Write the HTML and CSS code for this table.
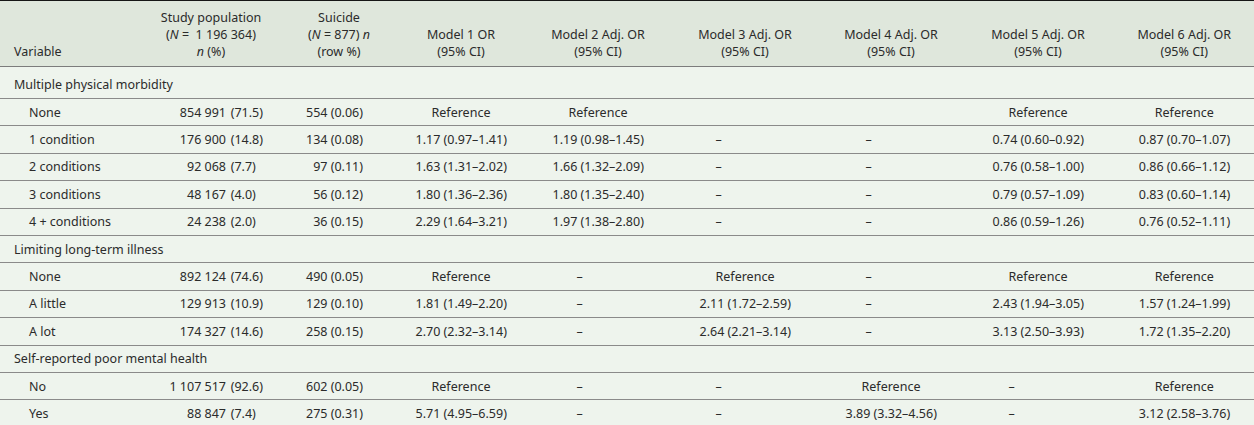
FILE: index.html
```html
<!DOCTYPE html>
<html>
<head>
<meta charset="utf-8">
<link rel="stylesheet" href="styles.css">
</head>
<body>
<table class="tbl">
  <colgroup>
    <col class="c-var"><col class="c-pop"><col class="c-sui"><col class="c-m1"><col class="c-m2"><col class="c-m3"><col class="c-m4"><col class="c-m5"><col class="c-m6">
  </colgroup>
  <thead>
    <tr>
      <th class="h-var">Variable</th>
      <th>Study population<br>(<i>N</i> = &nbsp;1 196 364)<br><i>n</i> (%)</th>
      <th>Suicide<br>(<i>N</i> = 877) <i>n</i><br>(row %)</th>
      <th>Model 1 OR<br>(95% CI)</th>
      <th>Model 2 Adj. OR<br>(95% CI)</th>
      <th>Model 3 Adj. OR<br>(95% CI)</th>
      <th>Model 4 Adj. OR<br>(95% CI)</th>
      <th>Model 5 Adj. OR<br>(95% CI)</th>
      <th>Model 6 Adj. OR<br>(95% CI)</th>
    </tr>
  </thead>
  <tbody>
    <tr class="sec first"><td colspan="9">Multiple physical morbidity</td></tr>
    <tr>
      <td class="sub">None</td><td class="pop"><span class="n">854 991</span><span class="p">(71.5)</span></td><td class="sui">554 (0.06)</td>
      <td class="m"><span class="v">Reference</span></td><td class="m"><span class="v">Reference</span></td><td class="m"></td><td class="m"></td>
      <td class="m"><span class="v">Reference</span></td><td class="m"><span class="v">Reference</span></td>
    </tr>
    <tr>
      <td class="sub">1 condition</td><td class="pop"><span class="n">176 900</span><span class="p">(14.8)</span></td><td class="sui">134 (0.08)</td>
      <td class="m"><span class="v">1.17 (0.97–1.41)</span></td><td class="m"><span class="v">1.19 (0.98–1.45)</span></td><td class="m"><span class="v d">–</span></td><td class="m"><span class="v d">–</span></td>
      <td class="m"><span class="v">0.74 (0.60–0.92)</span></td><td class="m"><span class="v">0.87 (0.70–1.07)</span></td>
    </tr>
    <tr>
      <td class="sub">2 conditions</td><td class="pop"><span class="n">92 068</span><span class="p">(7.7)</span></td><td class="sui">97 (0.11)</td>
      <td class="m"><span class="v">1.63 (1.31–2.02)</span></td><td class="m"><span class="v">1.66 (1.32–2.09)</span></td><td class="m"><span class="v d">–</span></td><td class="m"><span class="v d">–</span></td>
      <td class="m"><span class="v">0.76 (0.58–1.00)</span></td><td class="m"><span class="v">0.86 (0.66–1.12)</span></td>
    </tr>
    <tr>
      <td class="sub">3 conditions</td><td class="pop"><span class="n">48 167</span><span class="p">(4.0)</span></td><td class="sui">56 (0.12)</td>
      <td class="m"><span class="v">1.80 (1.36–2.36)</span></td><td class="m"><span class="v">1.80 (1.35–2.40)</span></td><td class="m"><span class="v d">–</span></td><td class="m"><span class="v d">–</span></td>
      <td class="m"><span class="v">0.79 (0.57–1.09)</span></td><td class="m"><span class="v">0.83 (0.60–1.14)</span></td>
    </tr>
    <tr>
      <td class="sub">4 + conditions</td><td class="pop"><span class="n">24 238</span><span class="p">(2.0)</span></td><td class="sui">36 (0.15)</td>
      <td class="m"><span class="v">2.29 (1.64–3.21)</span></td><td class="m"><span class="v">1.97 (1.38–2.80)</span></td><td class="m"><span class="v d">–</span></td><td class="m"><span class="v d">–</span></td>
      <td class="m"><span class="v">0.86 (0.59–1.26)</span></td><td class="m"><span class="v">0.76 (0.52–1.11)</span></td>
    </tr>
    <tr class="sec"><td colspan="9">Limiting long-term illness</td></tr>
    <tr>
      <td class="sub">None</td><td class="pop"><span class="n">892 124</span><span class="p">(74.6)</span></td><td class="sui">490 (0.05)</td>
      <td class="m"><span class="v">Reference</span></td><td class="m"><span class="v d">–</span></td><td class="m"><span class="v">Reference</span></td><td class="m"><span class="v d">–</span></td>
      <td class="m"><span class="v">Reference</span></td><td class="m"><span class="v">Reference</span></td>
    </tr>
    <tr>
      <td class="sub">A little</td><td class="pop"><span class="n">129 913</span><span class="p">(10.9)</span></td><td class="sui">129 (0.10)</td>
      <td class="m"><span class="v">1.81 (1.49–2.20)</span></td><td class="m"><span class="v d">–</span></td><td class="m"><span class="v">2.11 (1.72–2.59)</span></td><td class="m"><span class="v d">–</span></td>
      <td class="m"><span class="v">2.43 (1.94–3.05)</span></td><td class="m"><span class="v">1.57 (1.24–1.99)</span></td>
    </tr>
    <tr>
      <td class="sub">A lot</td><td class="pop"><span class="n">174 327</span><span class="p">(14.6)</span></td><td class="sui">258 (0.15)</td>
      <td class="m"><span class="v">2.70 (2.32–3.14)</span></td><td class="m"><span class="v d">–</span></td><td class="m"><span class="v">2.64 (2.21–3.14)</span></td><td class="m"><span class="v d">–</span></td>
      <td class="m"><span class="v">3.13 (2.50–3.93)</span></td><td class="m"><span class="v">1.72 (1.35–2.20)</span></td>
    </tr>
    <tr class="sec"><td colspan="9">Self-reported poor mental health</td></tr>
    <tr>
      <td class="sub">No</td><td class="pop"><span class="n">1 107 517</span><span class="p">(92.6)</span></td><td class="sui">602 (0.05)</td>
      <td class="m"><span class="v">Reference</span></td><td class="m"><span class="v d">–</span></td><td class="m"><span class="v d">–</span></td><td class="m"><span class="v">Reference</span></td>
      <td class="m"><span class="v d">–</span></td><td class="m"><span class="v">Reference</span></td>
    </tr>
    <tr>
      <td class="sub">Yes</td><td class="pop"><span class="n">88 847</span><span class="p">(7.4)</span></td><td class="sui">275 (0.31)</td>
      <td class="m"><span class="v">5.71 (4.95–6.59)</span></td><td class="m"><span class="v d">–</span></td><td class="m"><span class="v d">–</span></td><td class="m"><span class="v">3.89 (3.32–4.56)</span></td>
      <td class="m"><span class="v d">–</span></td><td class="m"><span class="v">3.12 (2.58–3.76)</span></td>
    </tr>
  </tbody>
</table>
</body>
</html>
```

FILE: styles.css
```css
html, body {
  margin: 0;
  padding: 0;
  background: #ffffff;
}
body {
  font-family: "Noto Sans", "Open Sans", sans-serif;
  font-size: 12.5px;
  color: #2b2b2b;
}
.tbl {
  width: 1254px;
  table-layout: fixed;
  border-collapse: collapse;
  border-top: 1px solid #161616;
  border-right: 1px solid #3a3a3a;
  border-bottom: 2px solid #161616;
}
.c-var { width: 139px; }
.c-pop { width: 144px; }
.c-sui { width: 112px; }
.c-m1 { width: 132px; }
.c-m2 { width: 142px; }
.c-m3 { width: 152px; }
.c-m4 { width: 140px; }
.c-m5 { width: 154px; }
.c-m6 { width: 139px; }

.tbl th {
  background: #dfe7dc;
  font-weight: normal;
  vertical-align: bottom;
  text-align: center;
  line-height: 17px;
  padding: 8px 0 6px;
  border-bottom: 1px solid #7c7c7c;
  white-space: nowrap;
}
.tbl th.h-var {
  text-align: left;
  padding-left: 14px;
}
.tbl td {
  background: #eef4ed;
  padding: 1px 0 0;
  height: 25.4px;
  line-height: 16px;
  border-bottom: 1px solid #8a8a8a;
  white-space: nowrap;
  vertical-align: middle;
}
.tbl .sec td {
  padding-left: 14px;
}
.tbl .sec.first td {
  height: 27px;
  padding-top: 4px;
}
.tbl td.sub {
  padding-left: 29px;
}
.tbl td.pop {
  padding-left: 21px;
}
.n {
  display: inline-block;
  width: 66px;
  text-align: right;
}
.p {
  margin-left: 4.7px;
}
.tbl td.sui {
  text-align: right;
  padding-right: 32px;
}
.tbl td.m {
  text-align: center;
}
.v {
  display: inline-block;
  width: 91px;
  text-align: center;
}
.v.d {
  text-align: left;
  padding-left: 16px;
  width: 75px;
}
.tbl td:nth-child(5) .v.d {
  padding-left: 24px;
  width: 67px;
}
.tbl td:nth-child(7) .v.d {
  padding-left: 20px;
  width: 71px;
}
```
